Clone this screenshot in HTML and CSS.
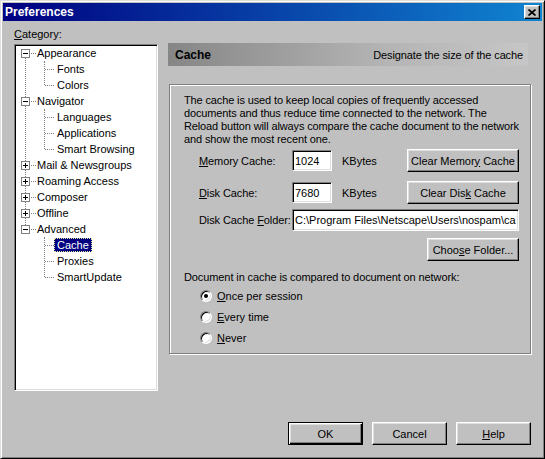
FILE: index.html
```html
<!DOCTYPE html>
<html>
<head>
<meta charset="utf-8">
<title>Preferences</title>
<link rel="stylesheet" href="styles.css">
</head>
<body>
<div class="window">
  <div class="titlebar">
    <span class="title">Preferences</span>
    <span class="close"><svg width="8" height="7" viewBox="0 0 8 7"><path d="M0.5 0.5 L7.5 6.5 M7.5 0.5 L0.5 6.5" stroke="#000" stroke-width="1.7" fill="none"/></svg></span>
  </div>
  <div class="content">
    <div class="main">
      <div class="left">
        <div class="cat"><u>C</u>ategory:</div>
        <div class="tree">
          <div class="list">
            <div class="node">
              <div class="row l1"><span class="box minus"></span><span class="lbl">Appearance</span></div>
              <div class="kids">
                <div class="row l2"><span class="lbl">Fonts</span></div>
                <div class="row l2"><span class="lbl">Colors</span></div>
              </div>
            </div>
            <div class="node">
              <div class="row l1"><span class="box minus"></span><span class="lbl">Navigator</span></div>
              <div class="kids">
                <div class="row l2"><span class="lbl">Languages</span></div>
                <div class="row l2"><span class="lbl">Applications</span></div>
                <div class="row l2"><span class="lbl">Smart Browsing</span></div>
              </div>
            </div>
            <div class="node"><div class="row l1"><span class="box plus"></span><span class="lbl">Mail &amp; Newsgroups</span></div></div>
            <div class="node"><div class="row l1"><span class="box plus"></span><span class="lbl">Roaming Access</span></div></div>
            <div class="node"><div class="row l1"><span class="box plus"></span><span class="lbl">Composer</span></div></div>
            <div class="node"><div class="row l1"><span class="box plus"></span><span class="lbl">Offline</span></div></div>
            <div class="node">
              <div class="row l1"><span class="box minus"></span><span class="lbl">Advanced</span></div>
              <div class="kids">
                <div class="row l2"><span class="lbl sel">Cache</span></div>
                <div class="row l2"><span class="lbl">Proxies</span></div>
                <div class="row l2"><span class="lbl">SmartUpdate</span></div>
              </div>
            </div>
          </div>
        </div>
      </div>
      <div class="right">
        <div class="header">
          <span class="htitle">Cache</span>
          <span class="hdesc">Designate the size of the cache</span>
        </div>
        <div class="group">
          <p class="intro">The cache is used to keep local copies of frequently accessed<br>documents and thus reduce time connected to the network. The<br>Reload button will always compare the cache document to the network<br>and show the most recent one.</p>
          <div class="frow r-mem">
            <span class="flabel"><u>M</u>emory Cache:</span>
            <input class="field small" type="text" value="1024">
            <span class="unit">KBytes</span>
            <button class="btn wide"><span>Clear Memor<u>y</u> Cache</span></button>
          </div>
          <div class="frow r-disk">
            <span class="flabel"><u>D</u>isk Cache:</span>
            <input class="field small" type="text" value="7680">
            <span class="unit">KBytes</span>
            <button class="btn wide"><span>Clear Dis<u>k</u> Cache</span></button>
          </div>
          <div class="frow r-folder">
            <span class="flabel">Disk Cache <u>F</u>older:</span>
            <input class="field long" type="text" value="C:\Program Files\Netscape\Users\nospam\cache">
          </div>
          <div class="frow r-choose">
            <button class="btn choose"><span>Choo<u>s</u>e Folder...</span></button>
          </div>
          <div class="doc">Document in cache is compared to document on network:</div>
          <div class="radios">
            <div class="ritem"><span class="radio on"></span><span><u>O</u>nce per session</span></div>
            <div class="ritem"><span class="radio"></span><span><u>E</u>very time</span></div>
            <div class="ritem"><span class="radio"></span><span><u>N</u>ever</span></div>
          </div>
        </div>
      </div>
    </div>
    <div class="footer">
      <button class="btn dlg default"><span>OK</span></button>
      <button class="btn dlg"><span>Cancel</span></button>
      <button class="btn dlg"><span><u>H</u>elp</span></button>
    </div>
  </div>
</div>
</body>
</html>
```
FILE: styles.css
```css
* { box-sizing: border-box; }
body {
  margin: 0;
  font-family: "Liberation Sans", Arial, sans-serif;
  font-size: 11px;
  color: #000;
  background: #c0c0c0;
}
.window {
  width: 545px;
  height: 459px;
  background: #c0c0c0;
  border: 1px solid;
  border-color: #dfdfdf #000 #000 #dfdfdf;
  box-shadow: inset 1px 1px #fff, inset -1px -1px #808080;
  padding: 2px;
  display: flex;
  flex-direction: column;
}
.titlebar {
  height: 18px;
  flex: none;
  background: linear-gradient(to right, #000080, #1084d0);
  display: flex;
  align-items: center;
  justify-content: space-between;
  padding: 0 2px;
  color: #fff;
  font-weight: bold;
  font-size: 12px;
}
.close {
  width: 16px;
  height: 14px;
  background: #c0c0c0;
  border: 1px solid;
  border-color: #fff #000 #000 #fff;
  box-shadow: inset -1px -1px #808080, inset 1px 1px #dfdfdf;
  display: flex;
  align-items: center;
  justify-content: center;
}
.close svg { display: block; }
.content {
  flex: 1;
  display: flex;
  flex-direction: column;
  padding: 0 11px 11px 11px;
}
.main { display: flex; gap: 10px; }
.left { width: 144px; padding-top: 7px; }
.cat { line-height: 13px; height: 16px; }
.tree {
  height: 347px;
  background: #fff;
  border: 1px solid;
  border-color: #808080 #fff #fff #808080;
  box-shadow: inset 1px 1px #000, inset -1px -1px #dfdfdf;
  padding: 1px;
  overflow: hidden;
}
.list { position: relative; margin-top: -1px; }
.list::before {
  content: "";
  position: absolute;
  left: 9px;
  top: 8px;
  height: 176px;
  border-left: 1px dotted #808080;
}
.row {
  position: relative;
  height: 16px;
  display: flex;
  align-items: center;
  white-space: nowrap;
}
.box {
  position: relative;
  z-index: 1;
  width: 9px;
  height: 9px;
  margin-left: 5px;
  border: 1px solid #808080;
  background: #fff;
  flex: none;
}
.box::before {
  content: "";
  position: absolute;
  left: 1px;
  top: 3px;
  width: 5px;
  height: 1px;
  background: #000;
}
.box.plus::after {
  content: "";
  position: absolute;
  left: 3px;
  top: 1px;
  width: 1px;
  height: 5px;
  background: #000;
}
.l1::after {
  content: "";
  position: absolute;
  left: 15px;
  top: 8px;
  width: 5px;
  border-top: 1px dotted #808080;
}
.l1 .lbl { margin-left: 7px; }
.kids { position: relative; }
.kids::before {
  content: "";
  position: absolute;
  left: 28px;
  top: 0;
  height: calc(100% - 8px);
  border-left: 1px dotted #808080;
}
.l2::before {
  content: "";
  position: absolute;
  left: 29px;
  top: 8px;
  width: 9px;
  border-top: 1px dotted #808080;
}
.l2 .lbl { margin-left: 38px; padding: 0 2px; line-height: 12px; border: 1px solid transparent; }
.lbl.sel {
  background: #000080;
  color: #fff;
  border: 1px dotted #e8e890;
}
.right { width: 363px; padding-top: 22px; }
.header {
  width: 360px;
  height: 23px;
  background: linear-gradient(to right, #868686, #b4b4b4 60%, #c6c6c6);
  display: flex;
  align-items: center;
  justify-content: space-between;
  padding: 0 5px 0 7px;
}
.htitle { font-weight: bold; font-size: 12px; }
.hdesc { letter-spacing: -0.12px; }
.group {
  margin-top: 18px;
  margin-left: 1px;
  width: 362px;
  height: 270px;
  border: 1px solid #808080;
  box-shadow: inset 1px 1px #fff, 1px 1px #fff;
  padding: 9px 11px 0 14px;
}
.intro { margin: 0; line-height: 13px; white-space: nowrap; letter-spacing: -0.13px; }
.frow {
  display: flex;
  align-items: center;
  padding-left: 15px;
}
.r-mem { height: 23px; margin-top: 3px; }
.r-disk { height: 23px; margin-top: 9px; }
.r-folder { height: 22px; margin-top: 5px; }
.r-choose { height: 23px; margin-top: 7px; justify-content: flex-end; }
.flabel { width: 93px; flex: none; white-space: nowrap; letter-spacing: -0.1px; }
.field {
  font-family: inherit;
  font-size: 11px;
  color: #000;
  background: #fff;
  border: 1px solid;
  border-color: #808080 #fff #fff #808080;
  box-shadow: inset 1px 1px #000, inset -1px -1px #dfdfdf;
  padding: 0 2px;
  outline: none;
  margin: 0;
}
.field.small { width: 40px; height: 21px; }
.field.long { flex: 1; min-width: 0; height: 22px; }
.unit { margin-left: 10px; }
.btn {
  font-family: inherit;
  font-size: 11px;
  color: #000;
  height: 23px;
  background: #c0c0c0;
  border: 1px solid;
  border-color: #fff #000 #000 #fff;
  box-shadow: inset -1px -1px #808080, inset 1px 1px #dfdfdf;
  padding: 0;
  margin: 0;
  display: flex;
  align-items: center;
  justify-content: center;
  white-space: nowrap;
}
.btn.wide { width: 112px; margin-left: auto; }
.btn.choose { width: 92px; }
.doc { margin-top: 10px; line-height: 13px; letter-spacing: -0.1px; }
.radios { margin-top: 1px; padding-left: 16px; }
.ritem { height: 21px; display: flex; align-items: center; gap: 5px; }
.radio {
  width: 12px;
  height: 12px;
  border-radius: 50%;
  background: #fff;
  border: 1px solid;
  border-color: #808080 #fff #fff #808080;
  box-shadow: inset 1px 1px #000, inset -1px -1px #dfdfdf;
  display: flex;
  align-items: center;
  justify-content: center;
  flex: none;
}
.radio.on::after {
  content: "";
  width: 4px;
  height: 4px;
  border-radius: 50%;
  background: #000;
}
.footer {
  margin-top: auto;
  display: flex;
  justify-content: flex-end;
  gap: 9px;
}
.btn.dlg { width: 75px; }
.btn.default {
  border-color: #000;
  box-shadow: inset 1px 1px #fff, inset -1px -1px #000, inset -2px -2px #808080, inset 2px 2px #dfdfdf;
}
```
